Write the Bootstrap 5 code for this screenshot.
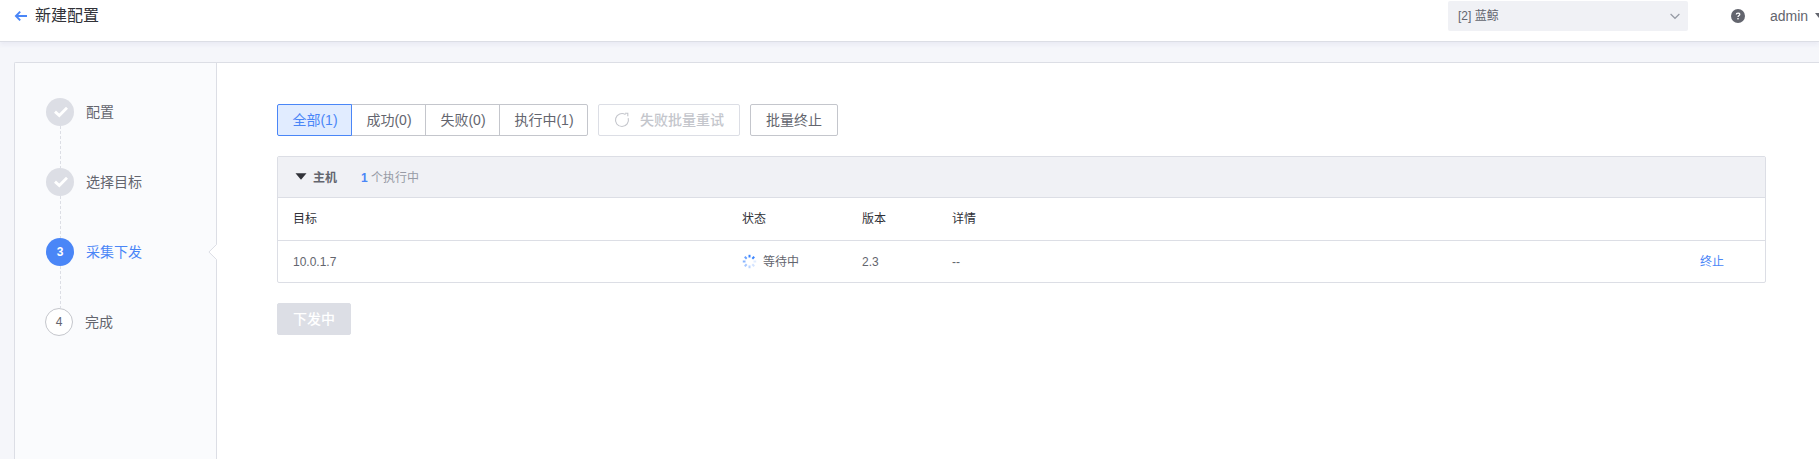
<!DOCTYPE html>
<html lang="zh-CN">
<head>
<meta charset="utf-8">
<meta name="viewport" content="width=device-width, initial-scale=1">
<title>新建配置</title>
<link href="https://cdn.jsdelivr.net/npm/bootstrap@5.3.0/dist/css/bootstrap.min.css" rel="stylesheet">
<style>
body{font-family:"Liberation Sans","Noto Sans CJK SC",sans-serif;font-size:14px;line-height:20px;color:#63656e;background:#f5f6fa;height:100vh;overflow:hidden}
svg{display:block;flex:none}
.topbar{height:42px;padding:1px 0 10px 14px;border-bottom:1px solid #dcdee5;box-shadow:0 3px 4px rgba(64,64,160,.06);flex:none;color:#63656e}
.page-title{font-size:16px;line-height:24px;color:#313238;margin-left:7px;margin-top:-1px}
.biz{width:240px;height:30px;background:#f0f1f5;border-radius:2px;font-size:12px;padding:0 8px 0 10px;margin-right:43px}
.user{margin-left:25px;width:49px;margin-top:-1px}
.panel{margin:20px 0 0 14px;border:1px solid #dcdee5;border-right:0;border-bottom:0;border-top-left-radius:2px;background:#fff}
.side{width:202px;background:#fafbfd;border-right:1px solid #dcdee5;padding:35px 0 0 31px;flex:none}
.notch{position:absolute;right:-9px;top:181px}
.step{height:70px;gap:12px}
.step-dot{width:28px;height:28px;border-radius:50%;background:#dcdee5;color:#fff;font-size:12px;z-index:1}
.step-line{width:1px;height:42px;margin-left:14px;background:repeating-linear-gradient(#dcdee5 0 3px,transparent 3px 5px)}
.step-text{line-height:28px}
.step.current .step-dot{background:#4a86f7;font-weight:700}
.step.current .step-text{color:#4a86f7}
.step.todo{margin-left:-1px}
.step.todo .step-dot{background:#fff;border:1px solid #c4c6cc;color:#63656e}
.work{padding:41px 53px 0 60px}
.btn{--bs-btn-font-size:14px;--bs-btn-line-height:20px;--bs-btn-padding-x:15px;--bs-btn-padding-y:5px;--bs-btn-border-radius:2px;--bs-btn-color:#63656e;--bs-btn-border-color:#c4c6cc;--bs-btn-disabled-opacity:1;height:32px;white-space:nowrap}
.btn-group .btn{width:75px;padding-left:1px;padding-right:0;flex:none}
.btn-group .btn:last-child{width:89px}
.btn.active{--bs-btn-active-color:#4a86f7;--bs-btn-active-bg:#e1ecff;--bs-btn-active-border-color:#4a86f7}
.btn-retry{--bs-btn-disabled-color:#c4c6cc;--bs-btn-disabled-border-color:#dcdee5;width:142px;margin:0 10px;font-weight:500}
.btn-send{--bs-btn-disabled-color:#fff;--bs-btn-disabled-bg:#dcdee5;--bs-btn-disabled-border-color:#dcdee5;width:74px;margin-top:20px;padding-left:0;padding-right:0;font-weight:500}
.hosts{border:1px solid #dcdee5;border-radius:2px;margin-top:20px;font-size:12px}
.hosts-head{height:41px;border-bottom:1px solid #dcdee5;background:#f0f1f5;padding-left:17px}
.hosts-head svg{margin-top:-1px}
.hosts-head b:not(.stop),.hosts-head span{padding-top:2px}
.summary{margin-left:24px;color:#979ba5}
.hosts .table{--bs-table-color:#63656e;--bs-table-bg:transparent;table-layout:fixed;border-color:#dcdee5}
.hosts .table th,.hosts .table td{padding:0 0 0 15px;vertical-align:middle;height:42px}
.hosts .table thead th{font-weight:400;color:#313238;height:43px}
.hosts .table tbody td{border-bottom:0;height:41px}
.hosts .table{border-collapse:separate;border-spacing:0}
.c1{width:449px}.c2{width:120px}.c3{width:90px}.c5{width:80px}
.stop{color:#4a86f7}
</style>
</head>
<body class="d-flex flex-column">
<header class="topbar navbar bg-white d-flex flex-nowrap align-items-center justify-content-start">
  <svg width="14" height="12" viewBox="0 0 14 12" fill="none" stroke="#4a86f7" stroke-width="1.9"><path d="M2 6H13M6.2 1.6L1.9 6l4.3 4.4"/></svg>
  <div class="page-title">新建配置</div>
  <div class="biz d-flex align-items-center justify-content-between ms-auto"><span>[2] 蓝鲸</span>
    <svg width="10" height="7" viewBox="0 0 10 7" fill="none" stroke="#979ba5" stroke-width="1.2"><path d="M.6 1l4.4 4.3L9.4 1"/></svg>
  </div>
  <svg width="14" height="14" viewBox="0 0 14 14"><circle cx="7" cy="7" r="7" fill="#63656e"/><path d="M5.3 5.5C5.3 3.6 8.8 3.6 8.8 5.4 8.8 6.6 7 6.6 7 8.1" fill="none" stroke="#fff" stroke-width="1.3"/><rect x="6.3" y="9" width="1.4" height="1.4" fill="#fff"/></svg>
  <div class="user d-flex align-items-center justify-content-between overflow-hidden"><span>admin</span><svg width="4" height="5" viewBox="0 0 4 5"><path d="M0 0h8L4 5z" fill="#63656e"/></svg></div>
</header>
<main class="panel d-flex flex-grow-1">
  <aside class="side position-relative">
    <div class="step d-flex">
      <div><div class="step-dot d-flex align-items-center justify-content-center"><svg width="28" height="28" viewBox="0 0 28 28" fill="none" stroke="#fff" stroke-width="2.8"><path d="M9 13.6l4.3 4 7.7-7.8"/></svg></div><div class="step-line"></div></div>
      <div class="step-text">配置</div>
    </div>
    <div class="step d-flex">
      <div><div class="step-dot d-flex align-items-center justify-content-center"><svg width="28" height="28" viewBox="0 0 28 28" fill="none" stroke="#fff" stroke-width="2.8"><path d="M9 13.6l4.3 4 7.7-7.8"/></svg></div><div class="step-line"></div></div>
      <div class="step-text">选择目标</div>
    </div>
    <div class="step current d-flex">
      <div><div class="step-dot d-flex align-items-center justify-content-center">3</div><div class="step-line"></div></div>
      <div class="step-text">采集下发</div>
    </div>
    <div class="step todo d-flex">
      <div><div class="step-dot d-flex align-items-center justify-content-center">4</div></div>
      <div class="step-text">完成</div>
    </div>
    <svg class="notch" width="17" height="16" viewBox="0 0 17 16"><path d="M8.5 .5L.9 8l7.6 7.5H17V.5z" fill="#fff"/><path d="M8.5 .5L.9 8l7.6 7.5" fill="none" stroke="#dcdee5"/></svg>
  </aside>
  <section class="work flex-grow-1">
    <div class="d-flex">
      <div class="btn-group">
        <button class="btn active">全部(1)</button><button class="btn">成功(0)</button><button class="btn">失败(0)</button><button class="btn">执行中(1)</button>
      </div>
      <button class="btn btn-retry d-flex align-items-center justify-content-center" disabled>
        <svg width="16" height="16" viewBox="0 0 16 16" fill="none" stroke="#c4c6cc" stroke-width="1.1"><path d="M14.2 6.2A6.5 6.5 0 1 1 11.5 2.6M11 1.3h2.8v2.9"/></svg><span style="margin-left:10px">失败批量重试</span>
      </button>
      <button class="btn">批量终止</button>
    </div>
    <div class="hosts">
      <div class="hosts-head d-flex align-items-center">
        <svg width="12" height="7" viewBox="0 0 12 7"><path d="M.5 .3h11L6 6.7z" fill="#313238"/></svg>
        <b style="margin-left:6px">主机</b>
        <span class="summary"><b class="stop">1</b> 个执行中</span>
      </div>
      <table class="table mb-0">
        <colgroup><col class="c1"><col class="c2"><col class="c3"><col><col class="c5"></colgroup>
        <thead><tr><th>目标</th><th>状态</th><th>版本</th><th>详情</th><th></th></tr></thead>
        <tbody><tr><td>10.0.1.7</td>
          <td><div class="d-flex align-items-center"><svg width="15" height="15" viewBox="-7.5 -7.5 15 15" stroke="#3a84ff" stroke-width="2"><path d="M0-4v-2.7"/><path d="M0-4v-2.7" transform="rotate(45)"/><path d="M0-4v-2.7" transform="rotate(90)" opacity=".15"/><path d="M0-4v-2.7" transform="rotate(135)" opacity=".22"/><path d="M0-4v-2.7" transform="rotate(180)" opacity=".35"/><path d="M0-4v-2.7" transform="rotate(225)" opacity=".45"/><path d="M0-4v-2.7" transform="rotate(270)" opacity=".6"/><path d="M0-4v-2.7" transform="rotate(315)" opacity=".75"/></svg><span style="margin-left:6px">等待中</span></div></td>
          <td>2.3</td><td>--</td><td><span class="stop">终止</span></td></tr></tbody>
      </table>
    </div>
    <button class="btn btn-send" disabled>下发中</button>
  </section>
</main>
<script src="https://cdn.jsdelivr.net/npm/bootstrap@5.3.0/dist/js/bootstrap.bundle.min.js"></script>
</body>
</html>
